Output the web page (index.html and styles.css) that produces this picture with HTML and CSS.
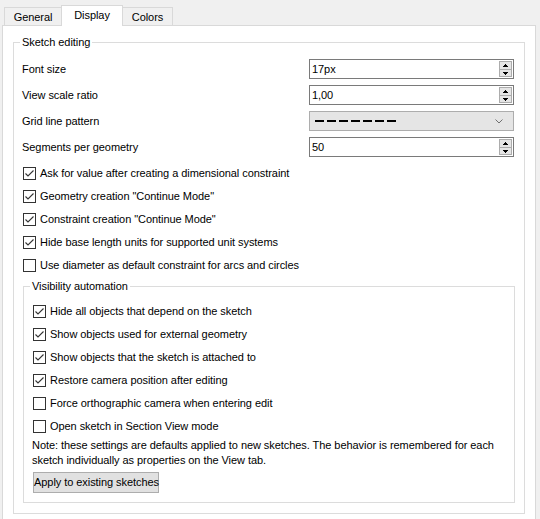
FILE: index.html
```html
<!DOCTYPE html>
<html>
<head>
<meta charset="utf-8">
<link rel="stylesheet" href="styles.css">
</head>
<body>
<div class="tabs">
  <div class="tab tab-general">General</div>
  <div class="tab tab-display">Display</div>
  <div class="tab tab-colors">Colors</div>
</div>
<div class="pane">
  <fieldset class="group sketch">
    <legend>Sketch editing</legend>
    <div class="form">
      <div class="frow">
        <span>Font size</span>
        <div class="spin"><span>17px</span>
          <span class="spinbtn">
            <span class="half"><svg width="5" height="3" shape-rendering="crispEdges"><rect x="2" y="0" width="1" height="1"/><rect x="1" y="1" width="3" height="1"/><rect x="0" y="2" width="5" height="1"/></svg></span>
            <span class="half lower"><svg width="5" height="3" shape-rendering="crispEdges"><rect x="0" y="0" width="5" height="1"/><rect x="1" y="1" width="3" height="1"/><rect x="2" y="2" width="1" height="1"/></svg></span>
          </span>
        </div>
      </div>
      <div class="frow">
        <span>View scale ratio</span>
        <div class="spin"><span>1,00</span>
          <span class="spinbtn">
            <span class="half"><svg width="5" height="3" shape-rendering="crispEdges"><rect x="2" y="0" width="1" height="1"/><rect x="1" y="1" width="3" height="1"/><rect x="0" y="2" width="5" height="1"/></svg></span>
            <span class="half lower"><svg width="5" height="3" shape-rendering="crispEdges"><rect x="0" y="0" width="5" height="1"/><rect x="1" y="1" width="3" height="1"/><rect x="2" y="2" width="1" height="1"/></svg></span>
          </span>
        </div>
      </div>
      <div class="frow">
        <span>Grid line pattern</span>
        <div class="combo"><span class="dashes"></span>
          <svg class="chev" width="8" height="5"><polyline points="0.5,0.5 4,4 7.5,0.5" fill="none" stroke="#707070" stroke-width="1"/></svg>
        </div>
      </div>
      <div class="frow">
        <span>Segments per geometry</span>
        <div class="spin"><span>50</span>
          <span class="spinbtn">
            <span class="half"><svg width="5" height="3" shape-rendering="crispEdges"><rect x="2" y="0" width="1" height="1"/><rect x="1" y="1" width="3" height="1"/><rect x="0" y="2" width="5" height="1"/></svg></span>
            <span class="half lower"><svg width="5" height="3" shape-rendering="crispEdges"><rect x="0" y="0" width="5" height="1"/><rect x="1" y="1" width="3" height="1"/><rect x="2" y="2" width="1" height="1"/></svg></span>
          </span>
        </div>
      </div>
    </div>
    <div class="checks outer">
      <div class="check"><svg class="box" width="13" height="13"><rect x="0.5" y="0.5" width="12" height="12" fill="#fff" stroke="#333"/><polyline points="2.5,6.5 5,9 10.5,3.5" fill="none" stroke="#333" stroke-width="1.1"/></svg><span>Ask for value after creating a dimensional constraint</span></div>
      <div class="check"><svg class="box" width="13" height="13"><rect x="0.5" y="0.5" width="12" height="12" fill="#fff" stroke="#333"/><polyline points="2.5,6.5 5,9 10.5,3.5" fill="none" stroke="#333" stroke-width="1.1"/></svg><span>Geometry creation "Continue Mode"</span></div>
      <div class="check"><svg class="box" width="13" height="13"><rect x="0.5" y="0.5" width="12" height="12" fill="#fff" stroke="#333"/><polyline points="2.5,6.5 5,9 10.5,3.5" fill="none" stroke="#333" stroke-width="1.1"/></svg><span>Constraint creation "Continue Mode"</span></div>
      <div class="check"><svg class="box" width="13" height="13"><rect x="0.5" y="0.5" width="12" height="12" fill="#fff" stroke="#333"/><polyline points="2.5,6.5 5,9 10.5,3.5" fill="none" stroke="#333" stroke-width="1.1"/></svg><span>Hide base length units for supported unit systems</span></div>
      <div class="check"><svg class="box" width="13" height="13"><rect x="0.5" y="0.5" width="12" height="12" fill="#fff" stroke="#333"/></svg><span>Use diameter as default constraint for arcs and circles</span></div>
    </div>
    <fieldset class="group vis">
      <legend>Visibility automation</legend>
      <div class="checks">
        <div class="check"><svg class="box" width="13" height="13"><rect x="0.5" y="0.5" width="12" height="12" fill="#fff" stroke="#333"/><polyline points="2.5,6.5 5,9 10.5,3.5" fill="none" stroke="#333" stroke-width="1.1"/></svg><span>Hide all objects that depend on the sketch</span></div>
        <div class="check"><svg class="box" width="13" height="13"><rect x="0.5" y="0.5" width="12" height="12" fill="#fff" stroke="#333"/><polyline points="2.5,6.5 5,9 10.5,3.5" fill="none" stroke="#333" stroke-width="1.1"/></svg><span>Show objects used for external geometry</span></div>
        <div class="check"><svg class="box" width="13" height="13"><rect x="0.5" y="0.5" width="12" height="12" fill="#fff" stroke="#333"/><polyline points="2.5,6.5 5,9 10.5,3.5" fill="none" stroke="#333" stroke-width="1.1"/></svg><span>Show objects that the sketch is attached to</span></div>
        <div class="check"><svg class="box" width="13" height="13"><rect x="0.5" y="0.5" width="12" height="12" fill="#fff" stroke="#333"/><polyline points="2.5,6.5 5,9 10.5,3.5" fill="none" stroke="#333" stroke-width="1.1"/></svg><span>Restore camera position after editing</span></div>
        <div class="check"><svg class="box" width="13" height="13"><rect x="0.5" y="0.5" width="12" height="12" fill="#fff" stroke="#333"/></svg><span>Force orthographic camera when entering edit</span></div>
        <div class="check"><svg class="box" width="13" height="13"><rect x="0.5" y="0.5" width="12" height="12" fill="#fff" stroke="#333"/></svg><span>Open sketch in Section View mode</span></div>
      </div>
      <p class="note">Note: these settings are defaults applied to new sketches. The behavior is remembered for each<br>sketch individually as properties on the View tab.</p>
      <button class="btn" type="button">Apply to existing sketches</button>
    </fieldset>
  </fieldset>
</div>
</body>
</html>
```
FILE: styles.css
```css
* { box-sizing: border-box; }
html, body { margin: 0; padding: 0; }
body {
  width: 540px;
  height: 519px;
  overflow: hidden;
  background: #f0f0f0;
  font-family: "Liberation Sans", Arial, sans-serif;
  font-size: 11px;
  line-height: 15px;
  letter-spacing: -0.06px;
  color: #000;
}
.tabs {
  display: flex;
  align-items: flex-end;
  height: 25px;
  padding-left: 4px;
}
.tab {
  height: 18px;
  border: 1px solid #d9d9d9;
  border-bottom: none;
  background: #f0f0f0;
  display: flex;
  align-items: center;
  justify-content: center;
  padding-top: 1px;
}
.tab-general { width: 58px; }
.tab-display {
  width: 62px;
  height: 21px;
  margin: 0 -1px -1px;
  padding: 0 0 2px;
  background: #fff;
  position: relative;
  z-index: 1;
}
.tab-colors { width: 51px; }
.pane {
  margin-left: 2px;
  width: 534px;
  height: 494px;
  border: 1px solid #d9d9d9;
  border-bottom: none;
  background: #fff;
  padding: 0 10px;
}
.group {
  border: 1px solid #dcdcdc;
  min-width: 0;
  margin: 0;
}
.group legend {
  padding: 0 2px;
  line-height: 15px;
}
.sketch {
  margin-top: 9px;
  padding: 9px 10px 10px 8px;
}
.sketch > legend { margin-left: -2px; }
.form {
  display: flex;
  flex-direction: column;
  gap: 6px;
}
.frow {
  display: flex;
  align-items: center;
  justify-content: space-between;
  height: 20px;
}
.spin {
  width: 205px;
  height: 20px;
  border: 1px solid #7a7a7a;
  background: #fff;
  display: flex;
  align-items: center;
  justify-content: space-between;
  padding: 0 1px 0 2px;
}
.spinbtn {
  width: 13px;
  height: 16px;
  border: 1px solid #acacac;
  background: #e5e5e5;
  display: grid;
  grid-template-rows: 1fr 1fr;
}
.half {
  display: flex;
  align-items: center;
  justify-content: center;
}
.half.lower { border-top: 1px solid #acacac; }
.half svg { display: block; fill: #000; }
.combo {
  width: 205px;
  height: 20px;
  border: 1px solid #adadad;
  background: #e5e5e5;
  display: flex;
  align-items: center;
  justify-content: space-between;
  padding: 0 10px 0 5px;
}
.dashes {
  width: 81px;
  height: 2px;
  background: repeating-linear-gradient(to right, #000 0 9px, transparent 9px 12px);
}
.chev { display: block; }
.checks {
  display: flex;
  flex-direction: column;
  gap: 6px;
}
.checks.outer {
  margin-top: 8px;
  padding-left: 1px;
}
.check {
  display: flex;
  align-items: center;
  gap: 4px;
  height: 17px;
  white-space: nowrap;
}
.box { display: block; flex: none; }
.vis {
  margin: 5px -1px 0 1px;
  padding: 9px 9px 9px 9px;
}
.vis > legend { margin-left: -3px; }
.note {
  margin: 3px 0 0 -1px;
  line-height: 15px;
  white-space: nowrap;
}
.btn {
  display: block;
  margin-top: 4px;
  width: 126px;
  height: 21px;
  border: 1px solid #adadad;
  background: #e1e1e1;
  font: inherit;
  letter-spacing: inherit;
  color: #000;
  padding: 0;
  white-space: nowrap;
}
```
